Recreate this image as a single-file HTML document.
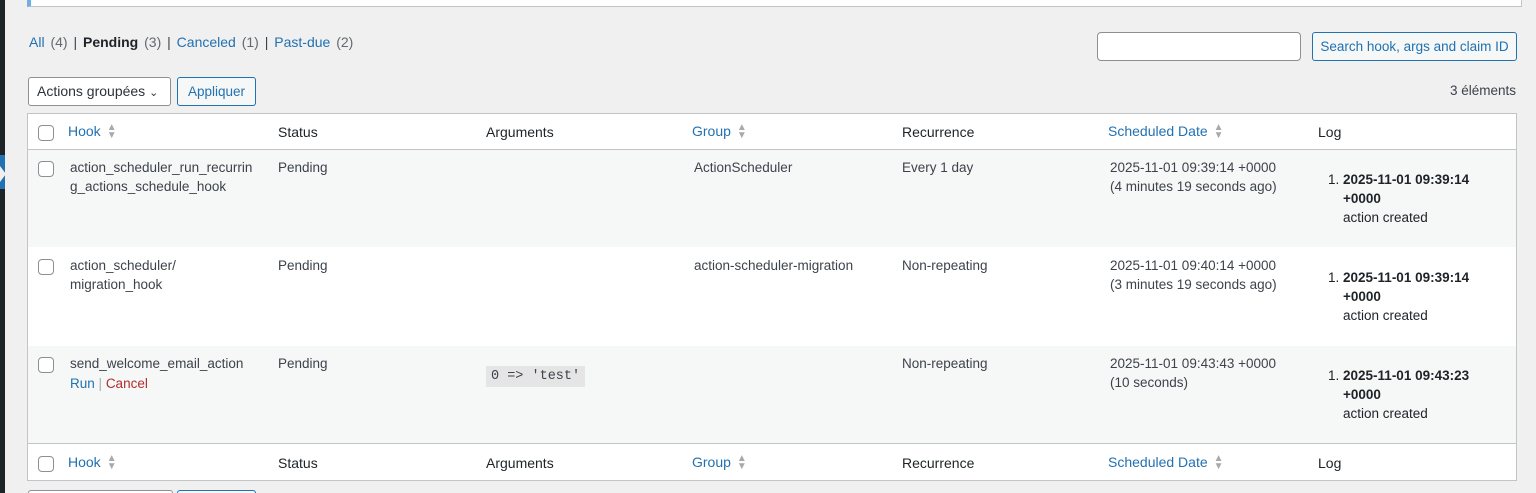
<!DOCTYPE html><html><head><style>
html,body{margin:0;width:1536px;height:493px;overflow:hidden}
body{background:#f0f0f1;font-family:"Liberation Sans",sans-serif;font-size:13.5px;color:#3c434a;position:relative}
.a{position:absolute}
a{color:#2271b1;text-decoration:none}
.cb{position:absolute;width:14px;height:14px;border:1px solid #8c8f94;border-radius:4px;background:#fff}
.sort{display:inline-block;margin-left:6px;vertical-align:middle;color:#a7aaad;font-size:10px;line-height:8px}
.btn{position:absolute;border:1px solid #2271b1;border-radius:3px;color:#2271b1;background:#f6f7f7;box-sizing:border-box;text-align:center}
code{font-family:"Liberation Mono",monospace;background:#e5e5e5;padding:3px 5px;font-size:13.5px;color:#3c434a}
</style></head><body>
<div class="a" style="left:0;top:0;width:5px;height:493px;background:#1d2327"></div>
<div class="a" style="left:0;top:155px;width:5px;height:34px;background:#2271b1"></div>
<div class="a" style="left:0;top:166px;width:0;height:0;border-top:8px solid transparent;border-bottom:8px solid transparent;border-left:6px solid #f0f0f1"></div>
<div class="a" style="left:27px;top:-2px;width:1490px;height:7px;background:#fff;border:1px solid #c3c4c7;border-left:4px solid #72aee6"></div>
<div class="a" style="left:29px;top:34px;font-size:14px;word-spacing:2px"><a>All</a> <span style="color:#646970">(4)</span> | <b style="color:#1d2327">Pending</b> <span style="color:#646970">(3)</span> | <a>Canceled</a> <span style="color:#646970">(1)</span> | <a>Past-due</a> <span style="color:#646970">(2)</span></div>
<div class="a" style="left:1097px;top:32px;width:202px;height:27px;border:1px solid #8c8f94;border-radius:4px;background:#fff"></div>
<div class="btn" style="left:1312px;top:32px;width:205px;height:29px;line-height:27px;font-size:13.5px">Search hook, args and claim ID</div>
<div class="a" style="left:28px;top:77px;height:27px;border:1px solid #8c8f94;border-radius:3px;background:#fff;line-height:27px;padding-left:8px;width:133px;color:#2c3338;font-size:14px">Actions groupées <span style="font-size:11px">&#8964;</span></div>
<div class="btn" style="left:177px;top:77px;width:79px;height:29px;line-height:27px">Appliquer</div>
<div class="a" style="right:20px;top:83px;color:#3c434a">3 éléments</div>
<div class="a" style="left:27px;top:113px;width:1488px;height:366px;border:1px solid #c3c4c7;background:#fff"></div>
<div class="a" style="left:28px;top:149px;width:1488px;height:1px;background:#c3c4c7"></div>
<div class="a" style="left:28px;top:150px;width:1488px;height:97px;background:#f6f7f7"></div>
<div class="a" style="left:28px;top:346px;width:1488px;height:97px;background:#f6f7f7"></div>
<div class="a" style="left:28px;top:443px;width:1488px;height:1px;background:#c3c4c7"></div>
<div class="cb" style="left:38px;top:125px"></div><div class="cb" style="left:38px;top:456px"></div>
<div class="a" style="top:123px;left:68px;font-size:14px"><a>Hook</a><span class="sort">▲<br>▼</span></div>
<div class="a" style="top:124px;left:278px;font-size:14px;color:#1d2327">Status</div>
<div class="a" style="top:124px;left:486px;font-size:14px;color:#1d2327">Arguments</div>
<div class="a" style="top:123px;left:692px;font-size:14px"><a>Group</a><span class="sort">▲<br>▼</span></div>
<div class="a" style="top:124px;left:902px;font-size:14px;color:#1d2327">Recurrence</div>
<div class="a" style="top:123px;left:1108px;font-size:14px"><a>Scheduled Date</a><span class="sort">▲<br>▼</span></div>
<div class="a" style="top:124px;left:1318px;font-size:14px;color:#1d2327">Log</div>
<div class="a" style="top:454px;left:68px;font-size:14px"><a>Hook</a><span class="sort">▲<br>▼</span></div>
<div class="a" style="top:455px;left:278px;font-size:14px;color:#1d2327">Status</div>
<div class="a" style="top:455px;left:486px;font-size:14px;color:#1d2327">Arguments</div>
<div class="a" style="top:454px;left:692px;font-size:14px"><a>Group</a><span class="sort">▲<br>▼</span></div>
<div class="a" style="top:455px;left:902px;font-size:14px;color:#1d2327">Recurrence</div>
<div class="a" style="top:454px;left:1108px;font-size:14px"><a>Scheduled Date</a><span class="sort">▲<br>▼</span></div>
<div class="a" style="top:455px;left:1318px;font-size:14px;color:#1d2327">Log</div>
<div style="line-height:19px">
<div class="cb" style="left:38px;top:161px"></div>
<div class="a" style="left:70px;top:158px">action_scheduler_run_recurrin<br>g_actions_schedule_hook</div>
<div class="a" style="left:278px;top:158px">Pending</div>
<div class="a" style="left:694px;top:158px">ActionScheduler</div>
<div class="a" style="left:902px;top:158px">Every 1 day</div>
<div class="a" style="left:1110px;top:158px">2025-11-01 09:39:14 +0000<br>(4 minutes 19 seconds ago)</div>
<div class="a" style="left:1328px;top:170px;color:#1d2327">1. <b>2025-11-01 09:39:14<br>&nbsp;&nbsp;&nbsp;&nbsp;+0000</b><br>&nbsp;&nbsp;&nbsp;&nbsp;action created</div>
<div class="cb" style="left:38px;top:259px"></div>
<div class="a" style="left:70px;top:256px">action_scheduler/<br>migration_hook</div>
<div class="a" style="left:278px;top:256px">Pending</div>
<div class="a" style="left:694px;top:256px">action-scheduler-migration</div>
<div class="a" style="left:902px;top:256px">Non-repeating</div>
<div class="a" style="left:1110px;top:256px">2025-11-01 09:40:14 +0000<br>(3 minutes 19 seconds ago)</div>
<div class="a" style="left:1328px;top:268px;color:#1d2327">1. <b>2025-11-01 09:39:14<br>&nbsp;&nbsp;&nbsp;&nbsp;+0000</b><br>&nbsp;&nbsp;&nbsp;&nbsp;action created</div>
<div class="cb" style="left:38px;top:357px"></div>
<div class="a" style="left:70px;top:354px">send_welcome_email_action<br><span style="line-height:22px"><a>Run</a> <span style="color:#a7aaad">|</span> <a style="color:#b32d2e">Cancel</a></span></div>
<div class="a" style="left:278px;top:354px">Pending</div>
<div class="a" style="left:486px;top:365px"><code>0 =&gt; 'test'</code></div>
<div class="a" style="left:902px;top:354px">Non-repeating</div>
<div class="a" style="left:1110px;top:354px">2025-11-01 09:43:43 +0000<br>(10 seconds)</div>
<div class="a" style="left:1328px;top:366px;color:#1d2327">1. <b>2025-11-01 09:43:23<br>&nbsp;&nbsp;&nbsp;&nbsp;+0000</b><br>&nbsp;&nbsp;&nbsp;&nbsp;action created</div>
</div>
<div class="a" style="left:28px;top:490px;width:143px;height:10px;border:1px solid #8c8f94;border-radius:3px;background:#fff"></div>
<div class="btn" style="left:177px;top:490px;width:79px;height:10px"></div>
</body></html>
